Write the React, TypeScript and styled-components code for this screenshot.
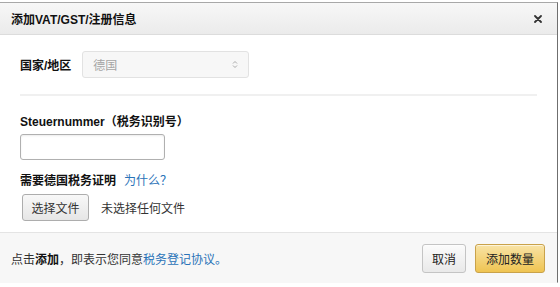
import React from 'react';
import styled, { createGlobalStyle } from 'styled-components';

const GlobalStyle = createGlobalStyle`
  html, body {
    margin: 0;
    padding: 0;
    background: #ffffff;
  }
  body {
    font-family: "Liberation Sans", "Noto Sans CJK SC", sans-serif;
    font-size: 12px;
    color: #222;
  }
`;

const App: React.FC = () => {
  return (
    <>
      <GlobalStyle />
      <Page>
        <Dialog>
          <Header>
            <Title>添加VAT/GST/注册信息</Title>
            <CloseButton aria-label="close">
              <svg width="8" height="8" viewBox="0 0 8 8">
                <path d="M1 1L7 7M7 1L1 7" stroke="#333" strokeWidth="1.8" strokeLinecap="round" />
              </svg>
            </CloseButton>
          </Header>

          <Body>
            <CountryRow>
              <Label>国家/地区</Label>
              <Select>
                <span>德国</span>
                <svg width="6" height="9" viewBox="0 0 6 9">
                  <path d="M1 3.5L3 1.5L5 3.5M1 5.5L3 7.5L5 5.5" stroke="#aaa" strokeWidth="1" fill="none" />
                </svg>
              </Select>
            </CountryRow>

            <Divider />

            <Field>
              <Label>Steuernummer（税务识别号）</Label>
              <TextInput />
            </Field>

            <Field $gap={6}>
              <LabelLine>
                <Label>需要德国税务证明</Label>
                <LinkText>为什么？</LinkText>
              </LabelLine>
              <FileRow>
                <FileButton>选择文件</FileButton>
                <FileHint>未选择任何文件</FileHint>
              </FileRow>
            </Field>
          </Body>

          <Footer>
            <Terms>
              点击<b>添加</b>，即表示您同意<LinkText>税务登记协议。</LinkText>
            </Terms>
            <Actions>
              <Button>取消</Button>
              <Button $primary>添加数量</Button>
            </Actions>
          </Footer>
        </Dialog>
      </Page>
    </>
  );
};

export default App;

const Page = styled.div`
  width: 560px;
  height: 287px;
  padding-top: 2px;
  box-sizing: border-box;
  overflow: hidden;
`;

const Dialog = styled.div`
  width: 558px;
  height: 281px;
  box-sizing: border-box;
  border-top: 1px solid #a8a8a8;
  border-right: 1px solid #6f6f6f;
  border-bottom: 1px solid #e2e2e2;
  background: #fff;
  display: flex;
  flex-direction: column;
`;

const Header = styled.div`
  height: 31px;
  flex: none;
  display: flex;
  align-items: center;
  justify-content: space-between;
  padding: 0 15px 0 11px;
  background: linear-gradient(#f7f7f7, #ebebeb);
  border-bottom: 1px solid #dcdcdc;
`;

const Title = styled.h4`
  margin: 0;
  font-size: 12px;
  font-weight: bold;
  color: #111;
`;

const CloseButton = styled.span`
  display: flex;
  align-items: center;
`;

const Body = styled.div`
  flex: 1;
  padding: 16px 20px 0 20px;
`;

const CountryRow = styled.div`
  display: flex;
  align-items: center;
  gap: 11px;
`;

const Label = styled.span`
  font-weight: bold;
  font-size: 12px;
  color: #111;
`;

const Select = styled.div`
  width: 167px;
  height: 27px;
  box-sizing: border-box;
  border: 1px solid #e2e2e2;
  border-radius: 3px;
  background: #f7f7f7;
  display: flex;
  align-items: center;
  justify-content: space-between;
  padding: 0 10px 0 10px;
  color: #a5a5a5;
  font-size: 12px;
`;

const Divider = styled.div`
  height: 2px;
  background: #f0f0f0;
  margin: 16px 0 16px 0;
  width: 517px;
`;

const Field = styled.div<{ $gap?: number }>`
  display: flex;
  flex-direction: column;
  gap: ${(p) => p.$gap ?? 5}px;
  margin-bottom: 11px;
`;

const TextInput = styled.div`
  width: 145px;
  height: 26px;
  box-sizing: border-box;
  border: 1px solid #b0b0b0;
  border-radius: 3px;
  background: #fff;
  box-shadow: inset 0 1px 2px rgba(0, 0, 0, 0.08);
`;

const LabelLine = styled.div`
  display: flex;
  align-items: center;
  gap: 8px;
`;

const LinkText = styled.span`
  color: #2a73b8;
`;

const FileRow = styled.div`
  display: flex;
  align-items: center;
  gap: 12px;
  padding-left: 2px;
`;

const FileButton = styled.div`
  width: 67px;
  height: 27px;
  box-sizing: border-box;
  display: flex;
  align-items: center;
  justify-content: center;
  border: 1px solid #adadad;
  border-radius: 3px;
  background: linear-gradient(#f8f8f8, #e6e6e6);
  color: #333;
  font-size: 12px;
`;

const FileHint = styled.span`
  color: #333;
`;

const Footer = styled.div`
  height: 50px;
  flex: none;
  display: flex;
  align-items: center;
  justify-content: space-between;
  padding: 0 12px 0 11px;
  background: #f7f7f7;
  border-top: 1px solid #e4e4e4;
`;

const Terms = styled.span`
  color: #333;
  b {
    color: #111;
  }
`;

const Actions = styled.div`
  display: flex;
  gap: 9px;
`;

const Button = styled.div<{ $primary?: boolean }>`
  height: 29px;
  box-sizing: border-box;
  padding: 0 ${(p) => (p.$primary ? 10 : 9)}px;
  display: flex;
  align-items: center;
  border-radius: 3px;
  font-size: 12px;
  color: #222;
  border: 1px solid ${(p) => (p.$primary ? '#c9a24a' : '#c4c4c4')};
  background: ${(p) =>
    p.$primary ? 'linear-gradient(#f8e3a6, #efc452)' : 'linear-gradient(#fbfbfb, #e9e9e9)'};
  box-shadow: 0 1px 0 rgba(255, 255, 255, 0.6) inset;
`;
